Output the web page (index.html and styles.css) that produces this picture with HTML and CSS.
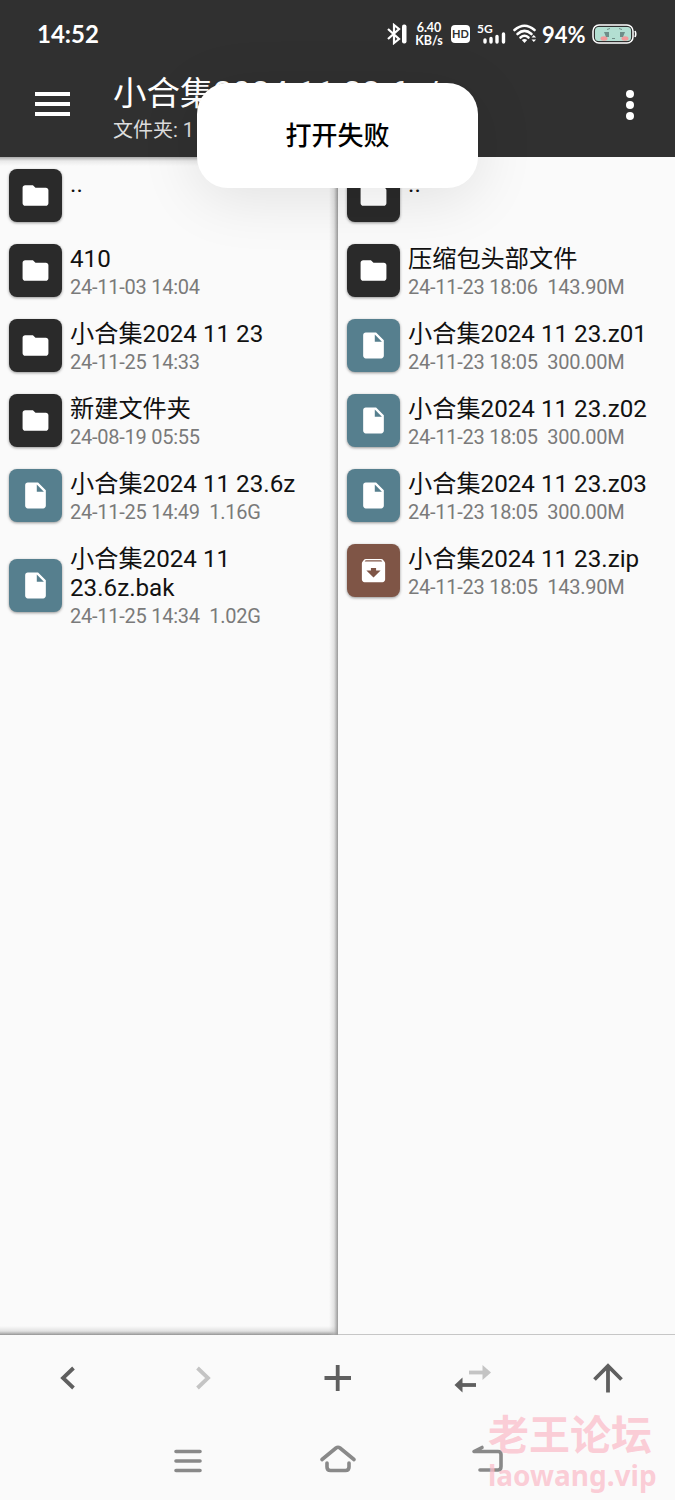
FILE: index.html
```html
<!DOCTYPE html>
<html lang="zh-CN">

<head>
    <meta charset="utf-8">
    <title>文件管理</title>
    <link rel="stylesheet" href="styles.css">
</head>

<body>
<svg class="defs">
    <symbol id="folder" viewBox="0 0 24 24">
        <path d="M10 4H4c-1.100 0-2 .9-2 2v12c0 1.100.9 2 2 2h16c1.100 0 2-.9 2-2V8c0-1.100-.9-2-2-2h-8z" />
    </symbol>
    <symbol id="file" viewBox="0 0 24 24">
        <path d="M6 2c-1.100 0-2 .9-2 2v16c0 1.100.9 2 2 2h12c1.100 0 2-.9 2-2V8l-6-6zm7 7V3.500L18.500 9z" />
    </symbol>
    <symbol id="archive" viewBox="0 0 24 24">
        <path d="M20.540 5.230l-1.390-1.680C18.880 3.210 18.470 3 18 3H6c-.47 0-.88.21-1.160.55L3.460 5.230C3.170 5.570 3 6.020 3 6.500V19c0 1.100.9 2 2 2h14c1.100 0 2-.9 2-2V6.500c0-.48-.17-.93-.46-1.270zM12 17.500L6.500 12H10v-2h4v2h3.500zM5.120 5l.81-1h12l.94 1z" />
    </symbol>
</svg>

<header class="header">
    <div class="status">
        <span class="time">14:52</span>
        <div class="status-icons">
            <svg width="22" height="22" viewBox="0 0 22 22">
                <path d="M1 6l11 10-5 4V2l5 4L1 16" fill="none" stroke="#fff" stroke-width="2.200" />
                <rect x="15" y="1.500" width="4.500" height="19" rx="2" fill="#fff" />
            </svg>
            <div class="speed"><span>6.40</span><span>KB/s</span></div>
            <span class="hd">HD</span>
            <div class="signal">
                <span>5G</span>
                <svg width="24" height="12" viewBox="0 0 24 12">
                    <path d="M3 8v2M9 6.500V10M15 4.500V10M21.500 2V10" stroke="#fff" stroke-width="3.400" stroke-linecap="round" />
                </svg>
            </div>
            <svg class="wifi" width="24" height="20" viewBox="0 0 24 20">
                <g fill="none" stroke="#fff" stroke-width="2.600" stroke-linecap="round">
                    <path d="M1.500 6Q11.500-2.500 21.500 6" />
                    <path d="M4.500 10Q11.500 3.800 18.500 10" />
                    <path d="M7.500 13.500Q11.500 10 15.500 13.500" />
                </g>
                <path d="M8.800 16q2.700-2 5.400 0l-2.700 3zM18.500 13.500l2.300-2.500 2.300 2.500zM18.500 15.500l2.300 2.500 2.300-2.500z" fill="#fff" />
            </svg>
            <span class="percent">94%</span>
            <svg width="45" height="20" viewBox="0 0 45 20">
                <rect x="1" y="1" width="40" height="18" rx="6" fill="none" stroke="#fff" stroke-width="1.500" />
                <rect x="3" y="3" width="36" height="14" rx="3.500" fill="#b3dfd2" />
                <path d="M43 7q1.500 3 0 6" stroke="#fff" stroke-width="1.600" fill="none" />
                <ellipse cx="12" cy="14.500" rx="3.500" ry="2.200" fill="#f29b9b" />
                <ellipse cx="33" cy="14.500" rx="3.500" ry="2.200" fill="#f29b9b" />
                <path d="M12 8h5v5h-3zM28 8h5l-2 5h-3z" fill="#6f8e88" />
                <path d="M15 5.500l3-1M27 4.500l3 1M20 14.500h3" stroke="#6f8e88" />
            </svg>
        </div>
    </div>
    <div class="appbar">
        <div class="menu"><i></i><i></i><i></i></div>
        <div class="heading">
            <div class="title">小合集2024 11 23.6z/</div>
            <div class="subtitle">文件夹: 1</div>
        </div>
        <div class="more"><i></i><i></i><i></i></div>
    </div>
</header>

<main class="panes">
    <section class="pane active">
        <div class="row">
            <div class="icon"><svg><use href="#folder" /></svg></div>
            <div class="text"><div class="name">..</div><div class="info">&nbsp;</div></div>
        </div>
        <div class="row">
            <div class="icon"><svg><use href="#folder" /></svg></div>
            <div class="text"><div class="name">410</div><div class="info">24-11-03 14:04</div></div>
        </div>
        <div class="row">
            <div class="icon"><svg><use href="#folder" /></svg></div>
            <div class="text"><div class="name">小合集2024 11 23</div><div class="info">24-11-25 14:33</div></div>
        </div>
        <div class="row">
            <div class="icon"><svg><use href="#folder" /></svg></div>
            <div class="text"><div class="name">新建文件夹</div><div class="info">24-08-19 05:55</div></div>
        </div>
        <div class="row">
            <div class="icon file"><svg><use href="#file" /></svg></div>
            <div class="text"><div class="name">小合集2024 11 23.6z</div><div class="info">24-11-25 14:49&nbsp; 1.16G</div></div>
        </div>
        <div class="row">
            <div class="icon file"><svg><use href="#file" /></svg></div>
            <div class="text"><div class="name">小合集2024 11<br>23.6z.bak</div><div class="info">24-11-25 14:34&nbsp; 1.02G</div></div>
        </div>
    </section>
    <section class="pane">
        <div class="row">
            <div class="icon"><svg><use href="#folder" /></svg></div>
            <div class="text"><div class="name">..</div><div class="info">&nbsp;</div></div>
        </div>
        <div class="row">
            <div class="icon"><svg><use href="#folder" /></svg></div>
            <div class="text"><div class="name">压缩包头部文件</div><div class="info">24-11-23 18:06&nbsp; 143.90M</div></div>
        </div>
        <div class="row">
            <div class="icon file"><svg><use href="#file" /></svg></div>
            <div class="text"><div class="name">小合集2024 11 23.z01</div><div class="info">24-11-23 18:05&nbsp; 300.00M</div></div>
        </div>
        <div class="row">
            <div class="icon file"><svg><use href="#file" /></svg></div>
            <div class="text"><div class="name">小合集2024 11 23.z02</div><div class="info">24-11-23 18:05&nbsp; 300.00M</div></div>
        </div>
        <div class="row">
            <div class="icon file"><svg><use href="#file" /></svg></div>
            <div class="text"><div class="name">小合集2024 11 23.z03</div><div class="info">24-11-23 18:05&nbsp; 300.00M</div></div>
        </div>
        <div class="row">
            <div class="icon archive"><svg><use href="#archive" /></svg></div>
            <div class="text"><div class="name">小合集2024 11 23.zip</div><div class="info">24-11-23 18:05&nbsp; 143.90M</div></div>
        </div>
    </section>
</main>

<div class="toolbar">
    <svg viewBox="0 0 40 40"><path d="M25.500 10L15 20l10.500 10" /></svg>
    <svg class="off" viewBox="0 0 40 40"><path d="M14.500 10L25 20 14.500 30" /></svg>
    <svg viewBox="0 0 40 40"><path d="M6.500 20H33M19.700 7v26" /></svg>
    <svg viewBox="0 0 40 40">
        <path class="off" d="M16 14.500h14" />
        <path class="head off" d="M29.500 7l8.500 7.500-8.500 7.500z" />
        <path d="M23 27H9" />
        <path class="head" d="M9.500 19.500L1.500 27l8 7.500z" />
    </svg>
    <svg viewBox="0 0 40 40"><path d="M20 8v26.500M6.500 21.500L20 8l13.500 13.500" /></svg>
</div>

<nav class="navbar">
    <svg viewBox="0 0 40 40"><path d="M8 10.500h24M8 20h24M8 29.500h24" /></svg>
    <svg viewBox="0 0 40 40"><path d="M4 18.500L18 7q2-1.500 4 0l14 11.500M9 22v4q0 3.500 3.500 3.500h15q3.500 0 3.500-3.500v-4" /></svg>
    <svg viewBox="0 0 40 40"><path d="M14 6.500L6 10.500h24q3 0 3 3v12q0 3.500-3 3.500H12" /></svg>
</nav>

<div class="toast">打开失败</div>
<div class="watermark">
    <div class="wm-name">老王论坛</div>
    <div class="wm-url">laowang.vip</div>
</div>
</body>

</html>
```

FILE: styles.css
```css
body {
    position: relative;
    width: 675px;
    height: 1500px;
    margin: 0;
    overflow: hidden;
    display: flex;
    flex-direction: column;
    background-color: #fafafa;
    font-family: Roboto, "Noto Sans CJK SC", sans-serif;
    color: #111;
}

.defs {
    position: absolute;
    width: 0;
    height: 0;
}

.header {
    height: 157px;
    flex: none;
    background-color: #303030;
    color: #fff;
}

.status {
    display: flex;
    align-items: center;
    justify-content: space-between;
    height: 67px;
    padding: 0 38px 0 37px;
    font-family: Lato, sans-serif;
    font-weight: bold;
}

.time {
    font-size: 24px;
}

.status-icons {
    display: flex;
    align-items: center;
}

.speed {
    display: flex;
    flex-direction: column;
    align-items: center;
    width: 30px;
    margin: 0 7px 0 5px;
    font-size: 12.5px;
    line-height: 13px;
}

.hd {
    width: 19px;
    height: 18px;
    margin-right: 7px;
    border-radius: 4px;
    background-color: #fff;
    color: #303030;
    font-size: 11px;
    line-height: 18px;
    text-align: center;
}

.signal {
    display: flex;
    flex-direction: column;
    width: 29px;
    font-size: 12px;
    line-height: 10px;
}

.signal svg {
    align-self: flex-end;
    margin-top: -2px;
}

.wifi {
    margin: 0 5px 0 7px;
}

.percent {
    width: 43px;
    margin-right: 7px;
    padding-top: 2px;
    font-size: 22px;
    white-space: nowrap;
}

.appbar {
    display: flex;
    height: 90px;
}

.menu {
    display: flex;
    flex-direction: column;
    gap: 6px;
    width: 35px;
    padding: 25px 43px 0 35px;
}

.menu i {
    height: 4px;
    background-color: #fff;
}

.heading {
    flex: 1;
    padding-top: 4px;
    white-space: nowrap;
}

.title {
    font-size: 33.5px;
    line-height: 46px;
}

.subtitle {
    font-size: 20px;
    line-height: 26px;
    color: #ddd;
}

.more {
    display: flex;
    flex-direction: column;
    gap: 3px;
    padding: 23px 41px 0 0;
}

.more i {
    width: 8px;
    height: 8px;
    border-radius: 50%;
    background-color: #fff;
}

.panes {
    display: flex;
    height: 1177px;
    flex: none;
    border-bottom: 1px solid #c6c6c6;
}

.pane {
    width: 337px;
    flex: none;
    box-sizing: border-box;
    padding-top: 1px;
}

.active {
    width: 338px;
    margin-bottom: -1px;
    background:
        linear-gradient(to left, #999, rgba(190, 190, 190, 0.4) 4px, transparent 9px),
        linear-gradient(to top, #999, rgba(190, 190, 190, 0.4) 4px, transparent 9px),
        linear-gradient(#aaa, rgba(210, 210, 210, 0.4) 4px, transparent 9px);
}

.row {
    display: flex;
    align-items: center;
}

.icon {
    display: flex;
    align-items: center;
    justify-content: center;
    width: 53px;
    height: 53px;
    margin: 0 8px 0 9px;
    border-radius: 8px;
    background-color: #2a2a2a;
    box-shadow: 0 1px 3px rgba(0, 0, 0, 0.4);
}

.icon svg {
    width: 31px;
    height: 31px;
    fill: #fff;
}

.file {
    background-color: #567f8e;
}

.archive {
    background-color: #7f5546;
}

.text {
    padding: 12px 0 7px;
    white-space: nowrap;
}

.name {
    font-size: 24.2px;
    line-height: 29px;
}

.info {
    font-size: 20px;
    line-height: 27px;
    letter-spacing: -0.25px;
    color: #7a7a7a;
}

.toolbar {
    display: flex;
    justify-content: space-around;
    padding: 23px 0 0;
}

.toolbar svg {
    width: 40px;
    height: 40px;
    fill: none;
    stroke: #5f5f5f;
    stroke-width: 3.8;
}

.toolbar .off {
    stroke: #c4c4c4;
}

.toolbar .head {
    fill: #5f5f5f;
    stroke: none;
}

.toolbar .head.off {
    fill: #c4c4c4;
}

.navbar {
    display: flex;
    justify-content: center;
    gap: 110px;
    padding-top: 43px;
}

.navbar svg {
    width: 40px;
    height: 40px;
    fill: none;
    stroke: #898989;
    stroke-width: 3.6;
    stroke-linecap: round;
    stroke-linejoin: round;
}

.toast {
    position: absolute;
    left: 197px;
    top: 83px;
    width: 281px;
    height: 105px;
    border-radius: 31px;
    background-color: #fff;
    box-shadow: 0 10px 60px rgba(0, 0, 0, 0.1);
    color: #000;
    font-size: 26px;
    font-weight: 500;
    line-height: 107px;
    text-align: center;
}

.watermark {
    position: absolute;
    left: 488px;
    top: 1409px;
    color: rgba(250, 190, 203, 0.75);
    font-family: "Noto Sans", "Noto Sans CJK SC", sans-serif;
    font-weight: bold;
    white-space: nowrap;
}

.wm-name {
    font-size: 41px;
    line-height: 50px;
}

.wm-url {
    font-size: 28px;
    line-height: 32px;
}
```
